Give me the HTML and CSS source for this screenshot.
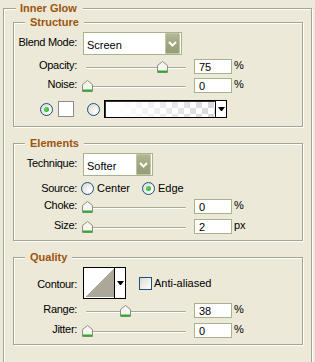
FILE: index.html
```html
<!doctype html>
<html>
<head>
<title>Inner Glow</title>
<link rel="stylesheet" href="styles.css">
</head>
<body>
<fieldset class="group panel">
<legend>Inner Glow</legend>

<fieldset class="group sub structure">
	<legend>Structure</legend>
	<div class="row sel">
		<span class="lbl">Blend Mode:</span>
		<div class="select blend"><span class="val">Screen</span><b class="drop"><svg width="15" height="21" viewBox="0 0 15 21"><polyline points="4,9 7.5,12.5 11,9" fill="none" stroke="#fff" stroke-width="2"/></svg></b></div>
	</div>
	<div class="row">
		<span class="lbl">Opacity:</span>
		<div class="slider"><i class="track"></i><svg class="thumb" style="left:75px" width="11" height="12" viewBox="0 0 11 12"><path d="M0.5 4.5 L5.5 0.5 L10.5 4.5 V11.5 H0.5 Z" fill="#f6f6f0" stroke="#8e8e80"/><rect x="1" y="9.5" width="9" height="2" fill="#2faa2f"/></svg></div>
		<input class="num" value="75" readonly><span class="unit">%</span>
	</div>
	<div class="row">
		<span class="lbl">Noise:</span>
		<div class="slider"><i class="track"></i><svg class="thumb" style="left:0px" width="11" height="12" viewBox="0 0 11 12"><path d="M0.5 4.5 L5.5 0.5 L10.5 4.5 V11.5 H0.5 Z" fill="#f6f6f0" stroke="#8e8e80"/><rect x="1" y="9.5" width="9" height="2" fill="#2faa2f"/></svg></div>
		<input class="num" value="0" readonly><span class="unit">%</span>
	</div>
	<div class="row clr">
		<span class="radio on"></span>
		<span class="swatch"></span>
		<span class="radio second"></span>
		<div class="grad"><span class="fill"></span><span class="arrow"><i class="tri"></i></span></div>
	</div>
</fieldset>

<fieldset class="group sub elements">
	<legend>Elements</legend>
	<div class="row sel">
		<span class="lbl">Technique:</span>
		<div class="select tech"><span class="val">Softer</span><b class="drop"><svg width="15" height="21" viewBox="0 0 15 21"><polyline points="4,9 7.5,12.5 11,9" fill="none" stroke="#fff" stroke-width="2"/></svg></b></div>
	</div>
	<div class="row src">
		<span class="lbl">Source:</span>
		<span class="opt center"><span class="radio"></span>Center</span>
		<span class="opt"><span class="radio on"></span>Edge</span>
	</div>
	<div class="row">
		<span class="lbl">Choke:</span>
		<div class="slider"><i class="track"></i><svg class="thumb" style="left:0px" width="11" height="12" viewBox="0 0 11 12"><path d="M0.5 4.5 L5.5 0.5 L10.5 4.5 V11.5 H0.5 Z" fill="#f6f6f0" stroke="#8e8e80"/><rect x="1" y="9.5" width="9" height="2" fill="#2faa2f"/></svg></div>
		<input class="num" value="0" readonly><span class="unit">%</span>
	</div>
	<div class="row wide">
		<span class="lbl">Size:</span>
		<div class="slider"><i class="track"></i><svg class="thumb" style="left:0px" width="11" height="12" viewBox="0 0 11 12"><path d="M0.5 4.5 L5.5 0.5 L10.5 4.5 V11.5 H0.5 Z" fill="#f6f6f0" stroke="#8e8e80"/><rect x="1" y="9.5" width="9" height="2" fill="#2faa2f"/></svg></div>
		<input class="num" value="2" readonly><span class="unit">px</span>
	</div>
</fieldset>

<fieldset class="group sub quality">
	<legend>Quality</legend>
	<div class="row contour">
		<span class="lbl">Contour:</span>
		<div class="curve"><span class="shape"></span><span class="arrow"><i class="tri"></i></span></div>
		<span class="check"></span><span class="check-text">Anti-aliased</span>
	</div>
	<div class="row">
		<span class="lbl">Range:</span>
		<div class="slider"><i class="track"></i><svg class="thumb" style="left:38px" width="11" height="12" viewBox="0 0 11 12"><path d="M0.5 4.5 L5.5 0.5 L10.5 4.5 V11.5 H0.5 Z" fill="#f6f6f0" stroke="#8e8e80"/><rect x="1" y="9.5" width="9" height="2" fill="#2faa2f"/></svg></div>
		<input class="num" value="38" readonly><span class="unit">%</span>
	</div>
	<div class="row wide">
		<span class="lbl">Jitter:</span>
		<div class="slider"><i class="track"></i><svg class="thumb" style="left:0px" width="11" height="12" viewBox="0 0 11 12"><path d="M0.5 4.5 L5.5 0.5 L10.5 4.5 V11.5 H0.5 Z" fill="#f6f6f0" stroke="#8e8e80"/><rect x="1" y="9.5" width="9" height="2" fill="#2faa2f"/></svg></div>
		<input class="num" value="0" readonly><span class="unit">%</span>
	</div>
</fieldset>

</fieldset>
</body>
</html>
```

FILE: styles.css
```css
body {
	margin: 0;
	background: #ece9d8;
	font: 11px "Liberation Sans", Arial, sans-serif;
	color: #000;
	overflow: hidden;
}
.group {
	margin: 0;
	padding: 0;
	min-width: 0;
	border: 1px solid #a5a493;
	box-shadow: inset 1px 1px 0 #fff, 1px 1px 0 #fff;
}
.group > legend {
	margin-left: 11px;
	padding: 0 5px;
	line-height: 13px;
	font-weight: bold;
	color: #9c540d;
	background: #ece9d8;
}
.panel {
	margin: 2px 0 0 3px;
	width: 309px;
	height: 400px;
	box-sizing: border-box;
	padding: 0 8px 0 9px;
}
.panel > legend {
	margin-left: 3px;
	padding: 0 6px 0 4px;
}
.structure {
	margin-top: 1px;
	padding-bottom: 8px;
}
.elements, .quality {
	margin-top: 10px;
	padding-bottom: 6px;
}

/* rows */
.row {
	display: flex;
	align-items: center;
	height: 15px;
	margin-top: 4px;
}
.row.wide { margin-top: 5px; }
.row.sel { height: 23px; margin-top: 3px; }
.row.clr { height: 18px; margin-top: 7px; padding-left: 26px; }
.row.src { height: 14px; margin-top: 5px; }
.row.contour { height: 32px; margin-top: 3px; }
.lbl {
	width: 63px;
	flex: none;
	text-align: right;
	padding-bottom: 4px;
	letter-spacing: -0.3px;
}
.src .lbl { padding-bottom: 0; }
.contour .lbl { padding: 2px 0 0; }

/* dropdown */
.select {
	margin-left: 6px;
	height: 23px;
	box-sizing: border-box;
	border: 1px solid #a5b48c;
	background: #fff;
	display: flex;
	align-items: center;
}
.select.blend { width: 99px; }
.select.tech { width: 70px; }
.select .val {
	flex: 1;
	padding: 2px 0 0 3px;
}
.drop {
	width: 15px;
	height: 21px;
	margin-right: 1px;
	border-radius: 2px;
	background: linear-gradient(#b4b995, #a2a781 50%, #949a75);
	box-shadow: inset 0 0 0 1px #c0c5a6;
}
.drop svg { display: block; }

/* slider + value box */
.slider {
	position: relative;
	margin-left: 5px;
	width: 110px;
	height: 12px;
	flex: none;
}
.track {
	position: absolute;
	left: 4px;
	top: 6px;
	width: 100px;
	height: 1px;
	background: #a8a79c;
	border-bottom: 1px solid #fff;
	border-radius: 1px;
}
.thumb {
	position: absolute;
	top: 0;
	display: block;
}
.num {
	margin: 0 0 0 2px;
	width: 38px;
	height: 15px;
	box-sizing: border-box;
	border: 1px solid #a5b48c;
	padding: 1px 0 0 4px;
	font: 11px "Liberation Sans", Arial, sans-serif;
	color: #000;
	outline: none;
}
.unit {
	margin-left: 2px;
	padding-bottom: 4px;
}

/* radios, checkbox */
.radio {
	width: 13px;
	height: 13px;
	box-sizing: border-box;
	border: 1px solid #1c5180;
	border-radius: 50%;
	background: radial-gradient(circle at 70% 70%, #fff, #e3e2da 70%, #d4d3c8);
	flex: none;
	display: flex;
	align-items: center;
	justify-content: center;
}
.radio.on::after {
	content: "";
	width: 5px;
	height: 5px;
	border-radius: 50%;
	background: radial-gradient(circle at 40% 40%, #60d860, #21a121);
}
.swatch {
	margin-left: 5px;
	width: 16px;
	height: 16px;
	box-sizing: border-box;
	border: 1px solid #8c8c8c;
	background: #fff;
}
.radio.second { margin-left: 13px; }
.opt {
	display: flex;
	align-items: center;
	gap: 3px;
}
.opt.center {
	margin-left: 4px;
	width: 61px;
}
.check {
	margin-left: 13px;
	width: 13px;
	height: 13px;
	box-sizing: border-box;
	border: 1px solid #1c5180;
	background: linear-gradient(135deg, #dcdcd5, #fff);
	flex: none;
}
.check-text { margin-left: 2px; }

/* gradient picker */
.grad {
	margin-left: 4px;
	width: 123px;
	height: 18px;
	box-sizing: border-box;
	border: 1px solid #000;
	box-shadow: inset 1px 1px 0 #333;
	display: flex;
	background: #fff;
}
.grad .fill {
	flex: 1;
	margin: 1px 0 0 1px;
	background:
		linear-gradient(to right, #fff 10%, rgba(255, 255, 255, 0)),
		conic-gradient(#d6d6d6 25%, #fff 0 50%, #d6d6d6 0 75%, #fff 0) 0 0 / 12px 12px;
}
.arrow {
	width: 10px;
	border-left: 1px solid #000;
	display: flex;
	align-items: center;
	justify-content: center;
	background: #fff;
}
.tri {
	width: 1px;
	height: 0;
	border-left: 3px solid transparent;
	border-right: 3px solid transparent;
	border-top: 4px solid #000;
}

/* contour picker */
.curve {
	margin-left: 6px;
	width: 43px;
	height: 32px;
	box-sizing: border-box;
	border: 1px solid #000;
	display: flex;
	background: #fff;
}
.curve .shape {
	flex: 1;
	margin: 1px 0 1px 1px;
	background: linear-gradient(to bottom right, #fff 50%, #aca899 50%);
}
```
